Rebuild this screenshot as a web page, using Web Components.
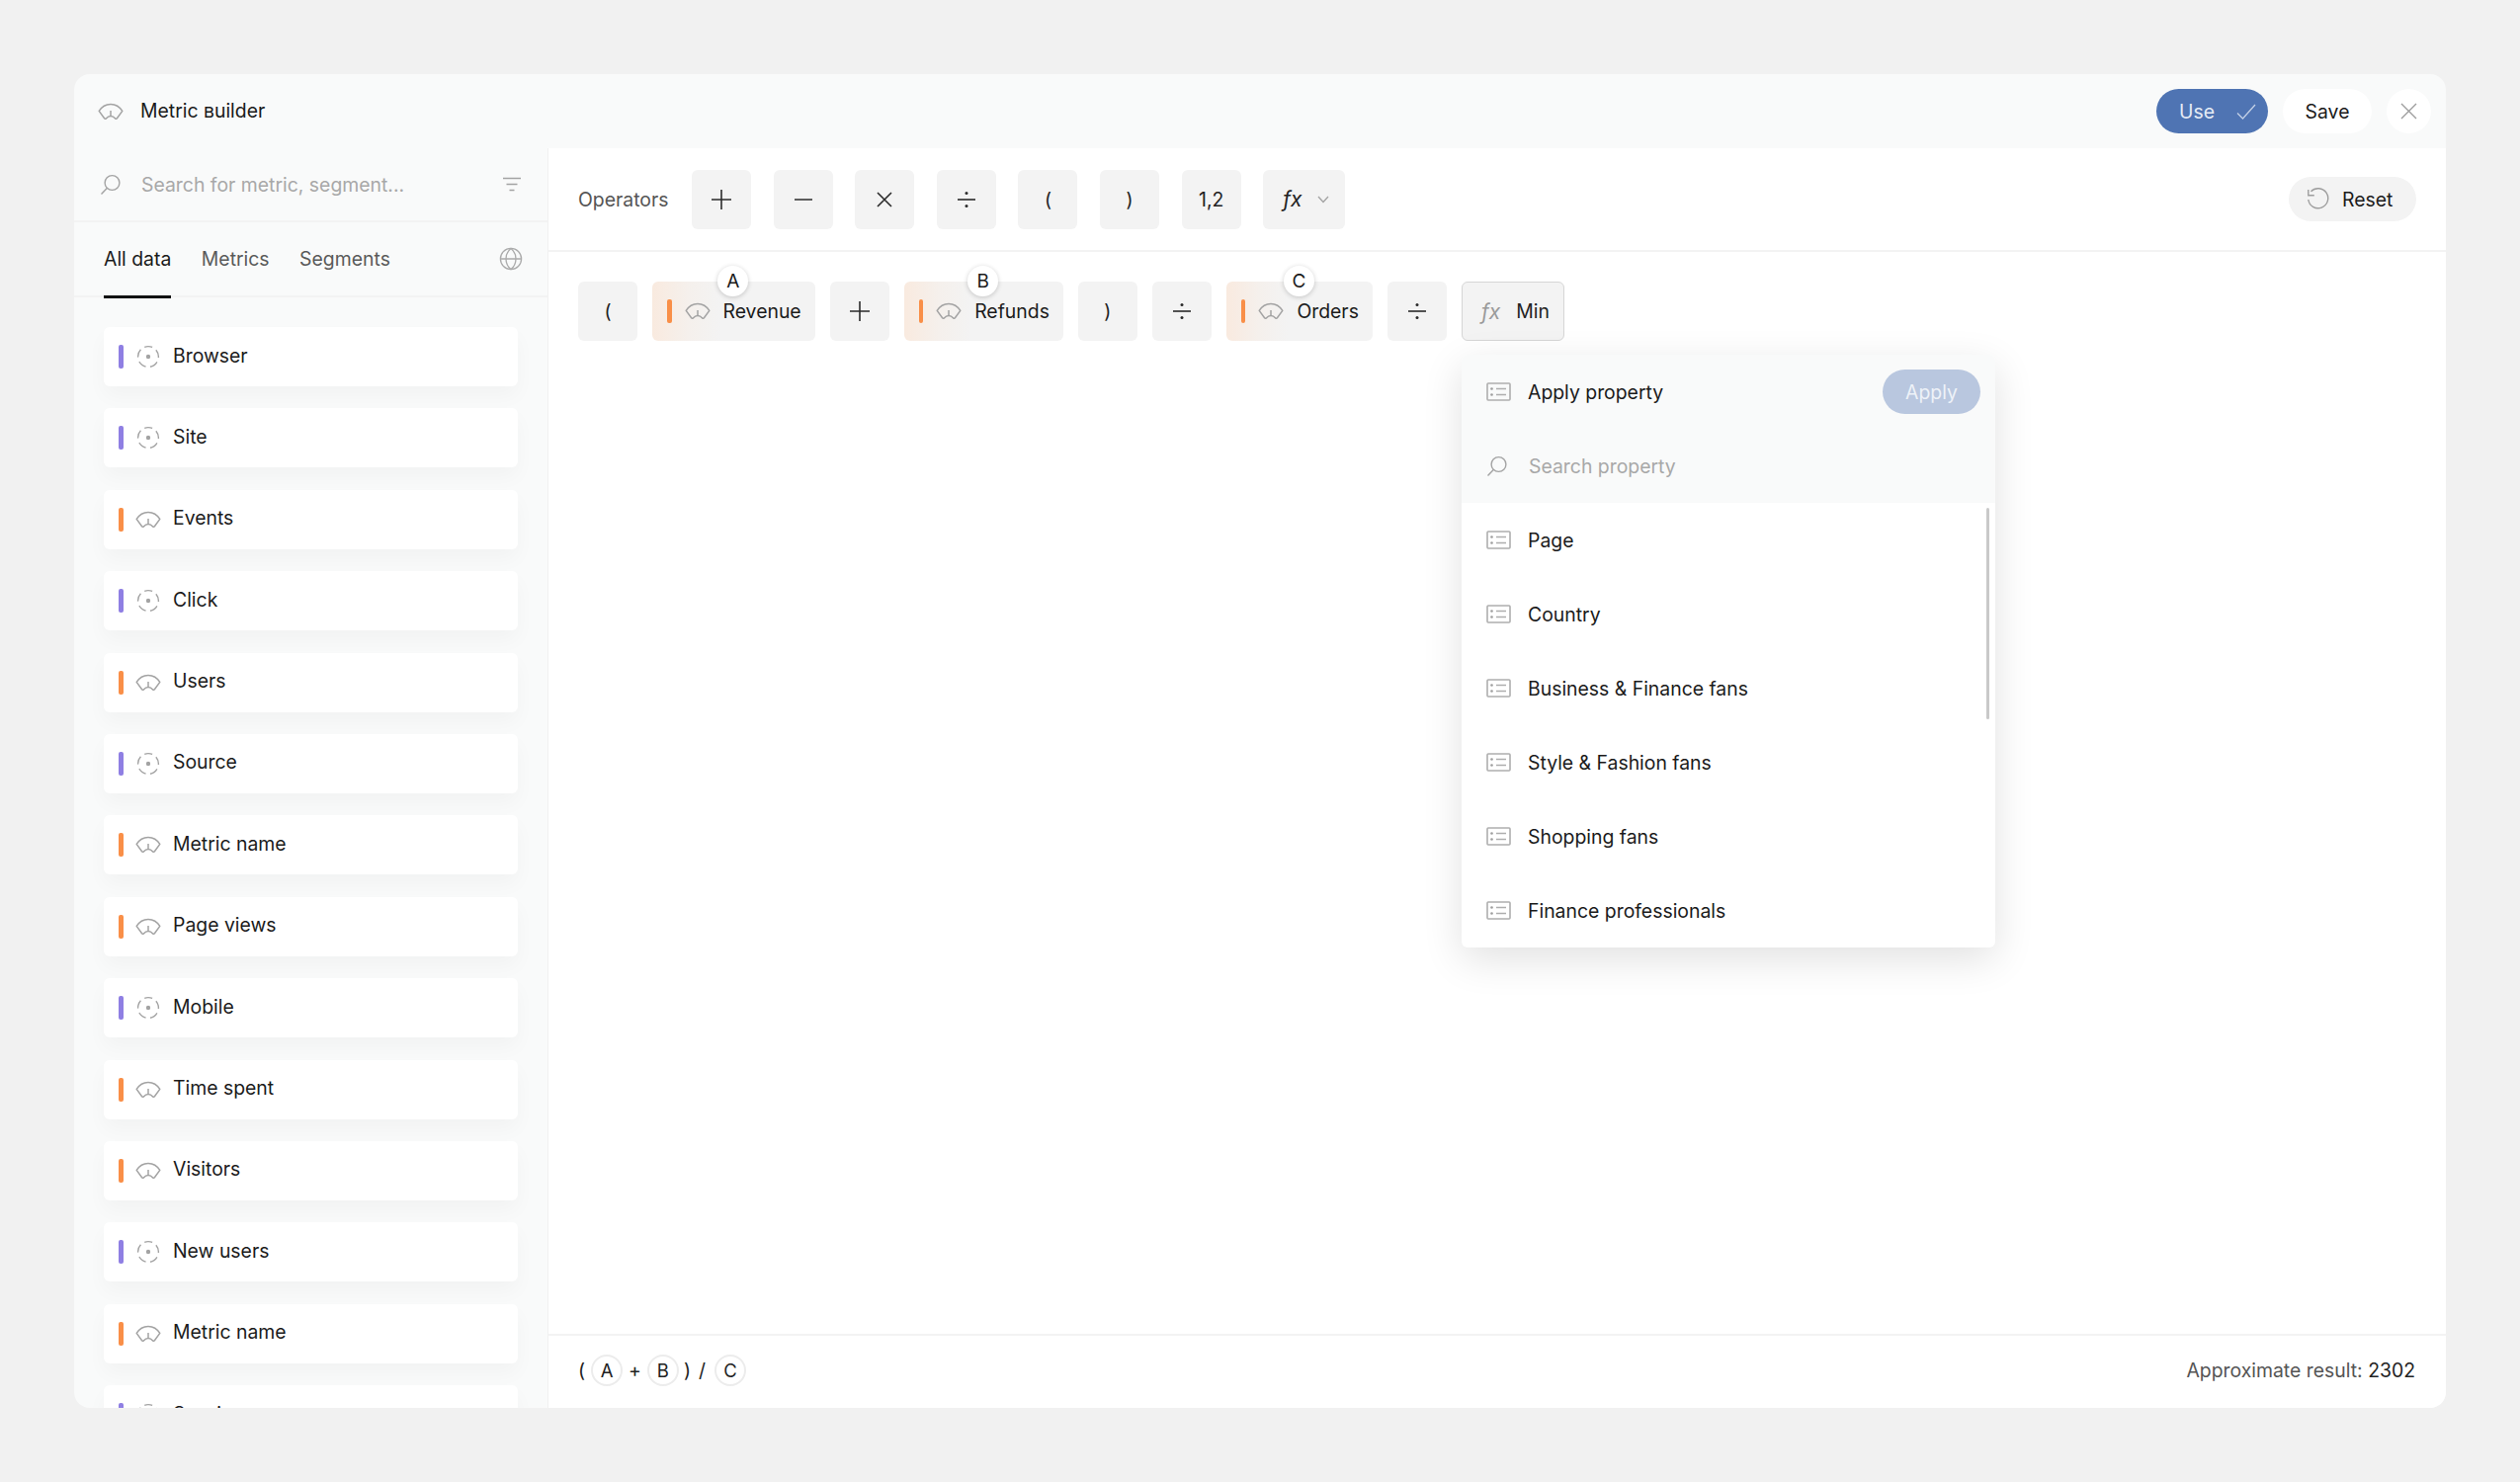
<!DOCTYPE html>
<html>
<head>
<meta charset="utf-8">
<title>Metric builder</title>
<style>
  html, body { margin: 0; height: 100%; background: #f1f1f1; }
  body { font-family: Inter, "Liberation Sans", sans-serif; color: #1b1b1b; }
</style>
</head>
<body>
<metric-app></metric-app>

<script>
const ICONS = {
  gauge: `<svg width="26" height="18" viewBox="0 0 26 18" fill="none" stroke="#a3a3a3" stroke-width="1.5" stroke-linejoin="round"><path d="M1.2 8.4C4 3.8 8 1.4 13 1.4s9 2.4 11.8 7l-5.4 7.4c-.5.6-1.2.6-1.7.1C16.4 14.4 14.8 13.4 13 13.4s-3.4 1-4.7 2.5c-.5.5-1.2.5-1.7-.1L1.2 8.4z"/><path d="M13 8v5.4"/></svg>`,
  target: `<svg width="24" height="24" viewBox="0 0 24 24" fill="none" stroke="#a3a3a3" stroke-width="1.4"><circle cx="12" cy="12" r="10.4" transform="rotate(-90 12 12)" stroke-dasharray="8.5 4.57" stroke-dashoffset="4.25"/><circle cx="12" cy="12" r="2.2" fill="#a3a3a3" stroke="none"/></svg>`,
  search: `<svg width="22" height="22" viewBox="0 0 22 22" fill="none" stroke="#a3a3a3" stroke-width="1.4"><circle cx="12.5" cy="9" r="7.4"/><path d="M7.2 14.4 1.5 20.5"/></svg>`,
  filter: `<svg width="20" height="16" viewBox="0 0 20 16" fill="none" stroke="#a3a3a3" stroke-width="1.4"><path d="M1 1.5h18M4.5 7.5h11M7.5 13.5h5"/></svg>`,
  globe: `<svg width="24" height="24" viewBox="0 0 24 24" fill="none" stroke="#ababab" stroke-width="1.3"><circle cx="12" cy="12" r="10.6"/><path d="M1.4 12h21.2M12 1.4c-3.6 3-5 6.6-5 10.6s1.4 7.6 5 10.6c3.6-3 5-6.6 5-10.6s-1.4-7.6-5-10.6z"/></svg>`,
  list: `<svg width="25" height="19" viewBox="0 0 25 19" fill="none" stroke="#aeaeae" stroke-width="1.6"><rect x="1" y="1" width="23" height="17" rx="1"/><path d="M10 6.5h10M10 12.5h10"/><circle cx="5.5" cy="6.5" r="1.3" fill="#9e9e9e" stroke="none"/><circle cx="5.5" cy="12.5" r="1.3" fill="#9e9e9e" stroke="none"/></svg>`,
  check: `<svg width="20" height="16" viewBox="0 0 20 16" fill="none" stroke="#c3d0e6" stroke-width="1.3"><path d="M1 9.5 6.5 15 19 1"/></svg>`,
  close: `<svg width="17" height="17" viewBox="0 0 17 17" fill="none" stroke="#9d9d9d" stroke-width="1.4"><path d="M1 1l15 15M16 1 1 16"/></svg>`,
  reset: `<svg width="23" height="23" viewBox="0 0 23 23" fill="none" stroke="#9d9d9d" stroke-width="1.4"><path d="M4.5 3.8A10 10 0 1 1 1.8 12"/><path d="M1.8 2v5.8h6"/></svg>`,
  plus: `<svg width="20" height="20" viewBox="0 0 20 20" stroke="#2b2b2b" stroke-width="1.6"><path d="M10 0v20M0 10h20"/></svg>`,
  minus: `<svg width="18" height="20" viewBox="0 0 18 20" stroke="#2b2b2b" stroke-width="1.6"><path d="M0 10h18"/></svg>`,
  times: `<svg width="16" height="16" viewBox="0 0 16 16" stroke="#2b2b2b" stroke-width="1.6"><path d="M1 1l14 14M15 1 1 15"/></svg>`,
  divide: `<svg width="18" height="20" viewBox="0 0 18 20" fill="#2b2b2b" stroke="none"><rect y="9.2" width="18" height="1.6"/><circle cx="9" cy="3.6" r="1.5"/><circle cx="9" cy="16.4" r="1.5"/></svg>`,
  chevron: `<svg width="12" height="8" viewBox="0 0 12 8" fill="none" stroke="#a3a3a3" stroke-width="1.3"><path d="M1 1l5 5.5L11 1"/></svg>`
};

// plain square/rect tile used for operators and expression parts
class OpTile extends HTMLElement {
  constructor() {
    super();
    this.attachShadow({ mode: 'open' });
    const icon = this.getAttribute('icon');
    this.shadowRoot.innerHTML = `
      <style>
        :host {
          display: inline-flex;
          flex: none;
          align-items: center;
          justify-content: center;
          min-width: 60px;
          height: 60px;
          box-sizing: border-box;
          background: #f3f3f3;
          border-radius: 6px;
          font-size: 19.4px;
          color: #222;
        }
        svg { display: block; }
      </style>
      ${icon ? ICONS[icon] : '<slot></slot>'}
    `;
  }
}
customElements.define('op-tile', OpTile);

class MetricChip extends HTMLElement {
  constructor() {
    super();
    this.attachShadow({ mode: 'open' });
    this.shadowRoot.innerHTML = `
      <style>
        :host {
          position: relative;
          display: inline-flex;
          flex: none;
          align-items: center;
          height: 60px;
          padding: 0 14px 0 15px;
          background: linear-gradient(90deg, #f9eadf 0%, #f5f0ec 22%, #f3f3f3 42%);
          border-radius: 6px;
          font-size: 19.4px;
          color: #1b1b1b;
        }
        .bar { width: 4.5px; height: 24px; border-radius: 2px; background: #f98f48; margin-right: 13px; }
        svg { display: block; margin-right: 13px; }
        .badge {
          position: absolute;
          top: -16px;
          left: 50%;
          width: 31px;
          height: 31px;
          margin-left: -16px;
          display: flex;
          align-items: center;
          justify-content: center;
          border-radius: 50%;
          background: #fff;
          box-shadow: 0 1px 5px rgba(0,0,0,.2);
          font-size: 19px;
        }
      </style>
      <span class="bar"></span>${ICONS.gauge}<slot></slot>
      <span class="badge">${this.getAttribute('letter')}</span>
    `;
  }
}
customElements.define('metric-chip', MetricChip);

class SideItem extends HTMLElement {
  constructor() {
    super();
    this.attachShadow({ mode: 'open' });
    const kind = this.getAttribute('kind');
    this.shadowRoot.innerHTML = `
      <style>
        :host {
          display: flex;
          flex: none;
          align-items: center;
          height: 60px;
          padding-left: 15px;
          background: #fff;
          border-radius: 6px;
          box-shadow: 0 10px 20px rgba(0,0,0,.03);
          font-size: 19.4px;
          color: #1b1b1b;
        }
        .bar { width: 4.5px; height: 24px; border-radius: 2px; margin-right: 12px; }
        .ic { width: 26px; display: flex; justify-content: center; margin-right: 12.5px; }
        svg { display: block; }
        slot { display: block; padding-bottom: 3px; }
      </style>
      <span class="bar" style="background:${kind === 'seg' ? '#8f7fe3' : '#f98f48'}"></span>
      <span class="ic">${kind === 'seg' ? ICONS.target : ICONS.gauge}</span>
      <slot></slot>
    `;
  }
}
customElements.define('side-item', SideItem);

class MetricSidebar extends HTMLElement {
  constructor() {
    super();
    this.attachShadow({ mode: 'open' });
    const items = [
      ['seg', 'Browser'], ['seg', 'Site'], ['met', 'Events'], ['seg', 'Click'], ['met', 'Users'],
      ['seg', 'Source'], ['met', 'Metric name'], ['met', 'Page views'], ['seg', 'Mobile'],
      ['met', 'Time spent'], ['met', 'Visitors'], ['seg', 'New users'], ['met', 'Metric name'], ['seg', 'Sessions']
    ];
    this.shadowRoot.innerHTML = `
      <style>
        :host {
          display: flex;
          flex-direction: column;
          flex: none;
          width: 480px;
          box-sizing: border-box;
          border-right: 1.5px solid #f1f1f1;
          overflow: hidden;
          min-height: 0;
        }
        .search {
          display: flex;
          flex: none;
          align-items: center;
          height: 73px;
          padding: 0 26px;
          border-bottom: 2px solid #f3f3f3;
          font-size: 19.4px;
          color: #a8a8a8;
        }
        .search span { flex: 1; margin-left: 20px; }
        .tabs {
          display: flex;
          flex: none;
          align-items: center;
          height: 74px;
          padding: 0 25px 0 30px;
          gap: 30.5px;
          border-bottom: 2px solid #f3f3f3;
          font-size: 19.4px;
          color: #5a5a5a;
        }
        .tab { position: relative; line-height: 76px; }
        .tab.on { color: #1b1b1b; }
        .tab.on::after {
          content: '';
          position: absolute;
          left: 0;
          right: 0;
          bottom: -1.5px;
          height: 3px;
          background: #111;
        }
        .tabs svg { margin-left: auto; }
        .list {
          display: flex;
          flex-direction: column;
          flex: 1;
          min-height: 0;
          gap: 22.4px;
          padding: 30px 30px 0;
          overflow: hidden;
        }
      </style>
      <div class="search">${ICONS.search}<span>Search for metric, segment...</span>${ICONS.filter}</div>
      <div class="tabs">
        <div class="tab on">All data</div>
        <div class="tab">Metrics</div>
        <div class="tab">Segments</div>
        ${ICONS.globe}
      </div>
      <div class="list">
        ${items.map(([k, n]) => `<side-item kind="${k}">${n}</side-item>`).join('')}
      </div>
    `;
  }
}
customElements.define('metric-sidebar', MetricSidebar);

class PropertyMenu extends HTMLElement {
  constructor() {
    super();
    this.attachShadow({ mode: 'open' });
    const props = ['Page', 'Country', 'Business &amp; Finance fans', 'Style &amp; Fashion fans', 'Shopping fans', 'Finance professionals'];
    this.shadowRoot.innerHTML = `
      <style>
        :host {
          position: absolute;
          left: 1479px;
          top: 359px;
          width: 540px;
          display: block;
          border-radius: 6px;
          background: #fff;
          box-shadow: 0 12px 40px rgba(0,0,0,.12);
          font-size: 19.4px;
          color: #1b1b1b;
          overflow: visible;
        }
        .row { display: flex; align-items: center; height: 75px; padding: 0 15px 0 25px; box-sizing: border-box; }
        .row > svg { margin-right: 17px; flex: none; }
        .top { background: #f9fafa; border-radius: 6px 6px 0 0; }
        .top .row:first-child span { flex: 1; }
        .apply {
          width: 99px;
          height: 45px;
          display: flex;
          align-items: center;
          justify-content: center;
          border-radius: 23px;
          background: #b9c7df;
          color: #eef2f8;
        }
        .find { color: #a8a8a8; }
        .items { position: relative; }
        .scroll { position: absolute; right: 6px; top: 5px; width: 3px; height: 214px; border-radius: 2px; background: #c9c9c9; }
      </style>
      <div class="top">
        <div class="row">${ICONS.list}<span>Apply property</span><div class="apply">Apply</div></div>
        <div class="row find">${ICONS.search}<span style="margin-left:4px">Search property</span></div>
      </div>
      <div class="items">
        ${props.map(p => `<div class="row">${ICONS.list}<span>${p}</span></div>`).join('')}
        <div class="scroll"></div>
      </div>
    `;
  }
}
customElements.define('property-menu', PropertyMenu);

class MetricApp extends HTMLElement {
  constructor() {
    super();
    this.attachShadow({ mode: 'open' });
    this.shadowRoot.innerHTML = `
      <style>
        :host {
          position: relative;
          display: flex;
          flex-direction: column;
          box-sizing: border-box;
          width: 2550px;
          height: 1500px;
          padding: 75px;
          font-size: 19.4px;
        }
        .win {
          display: flex;
          flex-direction: column;
          flex: 1;
          min-height: 0;
          background: #f9fafa;
          border-radius: 16px;
          overflow: hidden;
        }
        header {
          display: flex;
          flex: none;
          align-items: center;
          height: 75px;
          padding: 0 15px 0 24px;
        }
        header .name { flex: 1; margin-left: 17px; padding-bottom: 1px; }
        .pill {
          display: flex;
          align-items: center;
          justify-content: center;
          height: 45px;
          border-radius: 23px;
          background: #fff;
        }
        .use { width: 113px; box-sizing: border-box; padding-left: 23px; justify-content: flex-start; background: #4f74b3; color: #e6ecf6; gap: 22px; margin-right: 15px; }
        .save { width: 90px; margin-right: 15px; }
        .close { width: 45px; }
        .body { display: flex; flex: 1; min-height: 0; }
        main { display: flex; flex-direction: column; flex: 1; min-width: 0; background: #fff; }
        .ops {
          display: flex;
          flex: none;
          align-items: center;
          height: 105px;
          padding: 0 30px;
          gap: 22.6px;
          border-bottom: 2px solid #f3f3f3;
          box-sizing: border-box;
          color: #555;
        }
        .ops .label { width: 92.5px; flex: none; }
        .fx { font-style: italic; font-size: 21px; }
        .fxtile { width: 83px; gap: 15px; justify-content: flex-start; padding-left: 20px; }
        .reset { margin-left: auto; width: 129px; box-sizing: border-box; padding-left: 18px; justify-content: flex-start; gap: 13px; background: #f3f3f3; color: #1b1b1b; }
        .expr {
          display: flex;
          flex: 1;
          align-items: flex-start;
          gap: 15px;
          padding: 30px 30px 0;
        }
        .min {
          box-sizing: border-box;
          width: 104px;
          border: 1.5px solid #d6d6d6;
          gap: 16px;
          justify-content: flex-start;
          padding-left: 19px;
        }
        .min .fx { color: #9a9a9a; }
        footer {
          display: flex;
          flex: none;
          align-items: center;
          justify-content: space-between;
          height: 75px;
          padding: 0 31px 3px 30px;
          border-top: 2px solid #f3f3f3;
          box-sizing: border-box;
        }
        .formula { display: flex; align-items: center; gap: 6px; color: #222; }
        .formula b {
          font-weight: 400;
          flex: none;
          width: 32px;
          height: 32px;
          display: flex;
          align-items: center;
          justify-content: center;
          box-sizing: border-box;
          border: 2px solid #ececec;
          border-radius: 50%;
          font-size: 18.5px;
        }
        .formula .rp { margin-right: 2px; margin-left: -1px; }
        .formula .sl { margin-right: 3px; }
        .result { color: #555; }
        .result em { font-style: normal; color: #222; }
      </style>
      <div class="win">
        <header>
          ${ICONS.gauge}
          <span class="name">Metric вuilder</span>
          <div class="pill use">Use${ICONS.check}</div>
          <div class="pill save">Save</div>
          <div class="pill close">${ICONS.close}</div>
        </header>
        <div class="body">
          <metric-sidebar></metric-sidebar>
          <main>
            <div class="ops">
              <span class="label">Operators</span>
              <op-tile icon="plus"></op-tile>
              <op-tile icon="minus"></op-tile>
              <op-tile icon="times"></op-tile>
              <op-tile icon="divide"></op-tile>
              <op-tile>(</op-tile>
              <op-tile>)</op-tile>
              <op-tile>1,2</op-tile>
              <op-tile class="fxtile"><span class="fx">fx</span>${ICONS.chevron}</op-tile>
              <div class="pill reset">${ICONS.reset}Reset</div>
            </div>
            <div class="expr">
              <op-tile>(</op-tile>
              <metric-chip letter="A">Revenue</metric-chip>
              <op-tile icon="plus"></op-tile>
              <metric-chip letter="B">Refunds</metric-chip>
              <op-tile>)</op-tile>
              <op-tile icon="divide"></op-tile>
              <metric-chip letter="C">Orders</metric-chip>
              <op-tile icon="divide"></op-tile>
              <op-tile class="min"><span class="fx">fx</span><span>Min</span></op-tile>
            </div>
            <footer>
              <div class="formula"><span>(</span><b>A</b><span>+</span><b>B</b><span class="rp">)</span><span class="sl">/</span><b>C</b></div>
              <div class="result">Approximate result: <em>2302</em></div>
            </footer>
          </main>
        </div>
      </div>
      <property-menu></property-menu>
    `;
  }
}
customElements.define('metric-app', MetricApp);
</script>
</body>
</html>
